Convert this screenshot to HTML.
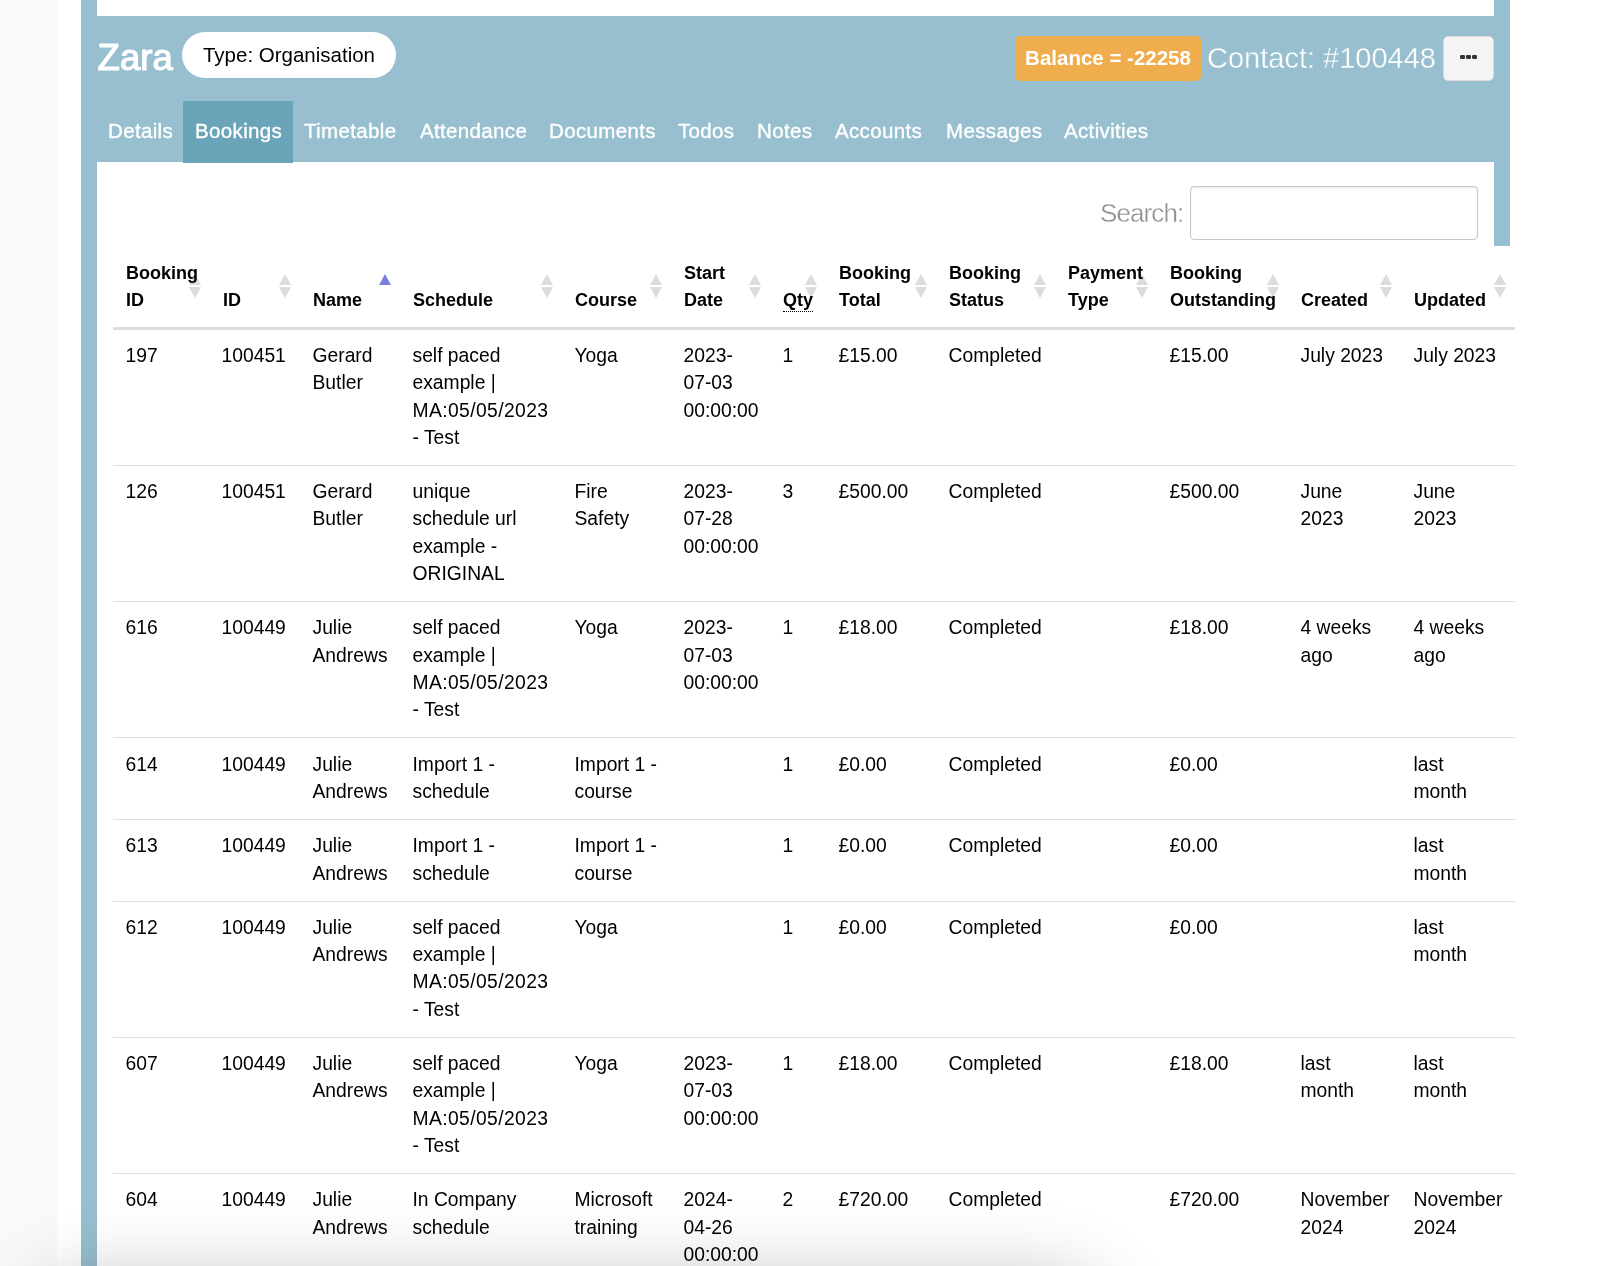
<!DOCTYPE html>
<html><head><meta charset="utf-8">
<style>
*{box-sizing:border-box}
html,body{will-change:transform;margin:0;padding:0;width:1604px;height:1266px;overflow:hidden;background:#fff;font-family:"Liberation Sans",sans-serif;color:#000}
.abs{position:absolute}
#lstrip{left:0;top:0;width:57px;height:1266px;background:#f9f9f9}
#blue{left:81px;top:0;width:1429px;height:1266px;background:#97bfcf}
#toppanel{left:97px;top:0;width:1397px;height:16px;background:#fff}
#zara{left:97.5px;top:34.9px;font-size:36.5px;line-height:46px;font-weight:normal;-webkit-text-stroke:1.2px #fff;color:#fff;letter-spacing:0.1px}
#pill{left:182px;top:32px;width:214px;height:46px;border-radius:23px;background:#fff;font-size:20.5px;line-height:45px;text-align:center;color:#000}
#badge{left:1015px;top:36px;width:186px;height:45px;border-radius:5px;background:#f0ad4e;color:#fff;font-weight:bold;font-size:20.5px;line-height:44px;text-align:center}
#contact{left:1207px;top:38px;font-size:29px;line-height:40px;color:#fff;-webkit-text-stroke:0.35px #97bfcf;paint-order:normal}
#more{left:1443px;top:36px;width:51px;height:45px;border-radius:5px;background:#f5f5f5;border:1px solid #e0d8d8}
#more i{position:absolute;top:17.5px;width:4.6px;height:4.6px;border-radius:1.2px;background:#333}
#tabs{left:97px;top:101px;height:62px}
.tab{position:absolute;top:0;height:62px;font-size:20.5px;line-height:59.4px;color:#fff;white-space:nowrap;letter-spacing:0.35px;-webkit-text-stroke:0.35px #fff}
.tab.active{background:#6aa4b9}
#panel{left:97px;top:162px;width:1397px;height:1104px;background:#fff}
#search{left:1100px;top:192.5px;font-size:26px;line-height:40px;color:#8f8f8f;letter-spacing:-0.9px;-webkit-text-stroke:0.35px #fff}
#sinput{left:1190px;top:186px;width:288px;height:54px;border:1px solid #c9c9c9;border-radius:4px;background:#fff;box-shadow:inset 0 1px 2px rgba(0,0,0,.09)}
#tbl{left:113px;top:245px;width:1402px;background:#fff;border-collapse:collapse;table-layout:fixed}
#tbl th{font-weight:bold;font-size:18px;line-height:27.2px;text-align:left;vertical-align:bottom;padding:14.8px 0 12.4px 13px;position:relative;border-bottom:3px solid #dddddd}
#tbl th span{position:relative;z-index:2}
#tbl td{font-size:19.3px;line-height:27.2px;vertical-align:top;padding:12.5px 0 13.85px 12.5px;border-bottom:1px solid #dedede;white-space:nowrap}
.s{position:absolute;right:8.5px;width:13px;height:24px;z-index:1}
.s:before{content:"";position:absolute;left:0;top:0;border-left:6.5px solid transparent;border-right:6.5px solid transparent;border-bottom:11px solid #dcdcdc}
.s:after{content:"";position:absolute;left:0;top:13px;border-left:6.5px solid transparent;border-right:6.5px solid transparent;border-top:11px solid #dcdcdc}
.s.up:after{display:none}
.s.up{right:8.2px}
.s.up:before{border-bottom-color:#7b80db}
.ma{letter-spacing:0.4px}
#tbl td:nth-child(2){text-indent:-1px}
abbr{text-decoration:none;border-bottom:1px dotted #000;padding-bottom:1px}
#shadow{left:40px;top:1285px;width:1060px;height:100px;border-radius:60px;box-shadow:0 0 80px 0 rgba(0,0,0,.3)}
</style></head><body>
<div class="abs" id="lstrip"></div>
<div class="abs" id="blue"></div>
<div class="abs" id="toppanel"></div>
<div class="abs" id="zara">Zara</div>
<div class="abs" id="pill">Type: Organisation</div>
<div class="abs" id="badge">Balance = -22258</div>
<div class="abs" id="contact">Contact: #100448</div>
<div class="abs" id="more"><i style="left:16px"></i><i style="left:22px"></i><i style="left:28px"></i></div>
<div class="abs" id="panel"></div>
<div class="abs" id="tabs">
<div class="tab" style="left:0;width:86px;padding-left:11px">Details</div>
<div class="tab active" style="left:86px;width:110px;padding-left:12px">Bookings</div>
<div class="tab" style="left:207px">Timetable</div>
<div class="tab" style="left:323px">Attendance</div>
<div class="tab" style="left:452px">Documents</div>
<div class="tab" style="left:581px">Todos</div>
<div class="tab" style="left:660px">Notes</div>
<div class="tab" style="left:738px">Accounts</div>
<div class="tab" style="left:849px">Messages</div>
<div class="tab" style="left:967px">Activities</div>
</div>
<div class="abs" id="search">Search:</div>
<div class="abs" id="sinput"></div>
<table class="abs" id="tbl">
<colgroup><col style="width:97px"><col style="width:90px"><col style="width:100px"><col style="width:162px"><col style="width:109px"><col style="width:99px"><col style="width:56px"><col style="width:110px"><col style="width:119px"><col style="width:102px"><col style="width:131px"><col style="width:113px"><col style="width:114px"></colgroup>
<thead><tr>
<th><span>Booking<br>ID</span><i class="s" style="top:29px"></i></th>
<th><span>ID</span><i class="s" style="top:29px"></i></th>
<th><span>Name</span><i class="s up" style="top:29px"></i></th>
<th><span>Schedule</span><i class="s" style="top:29px"></i></th>
<th><span>Course</span><i class="s" style="top:29px"></i></th>
<th><span>Start<br>Date</span><i class="s" style="top:29px"></i></th>
<th><span><abbr>Qty</abbr></span><i class="s" style="top:29px"></i></th>
<th><span>Booking<br>Total</span><i class="s" style="top:29px"></i></th>
<th><span>Booking<br>Status</span><i class="s" style="top:29px"></i></th>
<th><span>Payment<br>Type</span><i class="s" style="top:29px"></i></th>
<th><span>Booking<br>Outstanding</span><i class="s" style="top:29px"></i></th>
<th><span>Created</span><i class="s" style="top:29px"></i></th>
<th><span>Updated</span><i class="s" style="top:29px"></i></th>
</tr></thead>
<tbody>
<tr><td>197</td><td>100451</td><td>Gerard<br>Butler</td><td>self paced<br>example |<br><span class="ma">MA:05/05/2023</span><br>- Test</td><td>Yoga</td><td>2023-<br>07-03<br>00:00:00</td><td>1</td><td>£15.00</td><td>Completed</td><td></td><td>£15.00</td><td>July 2023</td><td>July 2023</td></tr>
<tr><td>126</td><td>100451</td><td>Gerard<br>Butler</td><td>unique<br>schedule url<br>example -<br>ORIGINAL</td><td>Fire<br>Safety</td><td>2023-<br>07-28<br>00:00:00</td><td>3</td><td>£500.00</td><td>Completed</td><td></td><td>£500.00</td><td>June<br>2023</td><td>June<br>2023</td></tr>
<tr><td>616</td><td>100449</td><td>Julie<br>Andrews</td><td>self paced<br>example |<br><span class="ma">MA:05/05/2023</span><br>- Test</td><td>Yoga</td><td>2023-<br>07-03<br>00:00:00</td><td>1</td><td>£18.00</td><td>Completed</td><td></td><td>£18.00</td><td>4 weeks<br>ago</td><td>4 weeks<br>ago</td></tr>
<tr><td>614</td><td>100449</td><td>Julie<br>Andrews</td><td>Import 1 -<br>schedule</td><td>Import 1 -<br>course</td><td></td><td>1</td><td>£0.00</td><td>Completed</td><td></td><td>£0.00</td><td></td><td>last<br>month</td></tr>
<tr><td>613</td><td>100449</td><td>Julie<br>Andrews</td><td>Import 1 -<br>schedule</td><td>Import 1 -<br>course</td><td></td><td>1</td><td>£0.00</td><td>Completed</td><td></td><td>£0.00</td><td></td><td>last<br>month</td></tr>
<tr><td>612</td><td>100449</td><td>Julie<br>Andrews</td><td>self paced<br>example |<br><span class="ma">MA:05/05/2023</span><br>- Test</td><td>Yoga</td><td></td><td>1</td><td>£0.00</td><td>Completed</td><td></td><td>£0.00</td><td></td><td>last<br>month</td></tr>
<tr><td>607</td><td>100449</td><td>Julie<br>Andrews</td><td>self paced<br>example |<br><span class="ma">MA:05/05/2023</span><br>- Test</td><td>Yoga</td><td>2023-<br>07-03<br>00:00:00</td><td>1</td><td>£18.00</td><td>Completed</td><td></td><td>£18.00</td><td>last<br>month</td><td>last<br>month</td></tr>
<tr><td>604</td><td>100449</td><td>Julie<br>Andrews</td><td>In Company<br>schedule</td><td>Microsoft<br>training</td><td>2024-<br>04-26<br>00:00:00</td><td>2</td><td>£720.00</td><td>Completed</td><td></td><td>£720.00</td><td>November<br>2024</td><td>November<br>2024</td></tr>
</tbody></table>
<div class="abs" style="left:1494px;top:244px;width:16px;height:1.7px;background:#97bfcf;z-index:3"></div>
<div class="abs" id="shadow"></div>
</body></html>
